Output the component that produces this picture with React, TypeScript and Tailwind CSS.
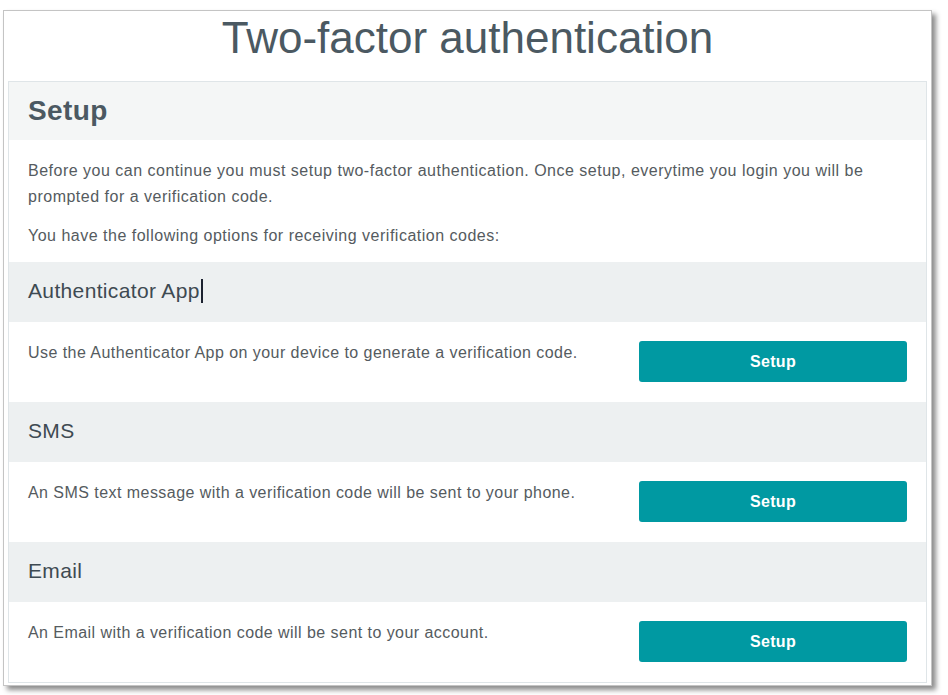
import React from "react";

type Method = {
    title: string;
    description: string;
    cursor?: boolean;
};

const methods: Method[] = [
    {
        title: "Authenticator App",
        description: "Use the Authenticator App on your device to generate a verification code.",
        cursor: true,
    },
    {
        title: "SMS",
        description: "An SMS text message with a verification code will be sent to your phone.",
    },
    {
        title: "Email",
        description: "An Email with a verification code will be sent to your account.",
    },
];

export default function App() {
    return (
        <div className="min-h-[695px] bg-white pt-[10px] pl-[3px] font-['Liberation_Sans',Arial,sans-serif]">
            <div className="w-[929px] h-[676px] border border-[#c4c4c4] bg-white shadow-[4px_4px_5px_rgba(0,0,0,0.45)] px-[4px]">
                <h1 className="h-[70px] text-center text-[44px] leading-[54px] text-[#4b5962]">
                    Two-factor authentication
                </h1>

                <div className="border border-[#dfe5e8]">
                    <div className="h-[58px] bg-[#f4f6f6] flex items-center px-[19px]">
                        <h2 className="text-[28px] tracking-[0.4px] font-bold text-[#4b5962]">Setup</h2>
                    </div>

                    <div className="px-[19px] pt-[18px] pb-[13px] text-[16px] tracking-[0.5px] leading-[26px] text-[#555b60]">
                        <p>
                            Before you can continue you must setup two-factor authentication. Once setup, everytime you login you will be prompted for a verification code.
                        </p>
                        <p className="mt-[13px]">You have the following options for receiving verification codes:</p>
                    </div>

                    {methods.map((m) => (
                        <div key={m.title}>
                            <div className="h-[60px] bg-[#edf0f1] flex items-center px-[19px] pb-[3px] text-[21px] tracking-[0.35px] text-[#3e4a52]">
                                {m.title}
                                {m.cursor && <span className="inline-block w-[2px] h-[24px] bg-[#1c2230] ml-[1px]" />}
                            </div>
                            <div className="h-[80px] flex items-start justify-between pl-[19px] pr-[19px] pt-[19px]">
                                <p className="text-[16px] tracking-[0.45px] leading-[24px] text-[#555b60]">{m.description}</p>
                                <button
                                    type="button"
                                    className="w-[268px] h-[41px] rounded-[3px] bg-[#0099a2] text-white text-[16px] tracking-[0.3px] font-bold shrink-0"
                                >
                                    Setup
                                </button>
                            </div>
                        </div>
                    ))}
                </div>
            </div>
        </div>
    );
}
